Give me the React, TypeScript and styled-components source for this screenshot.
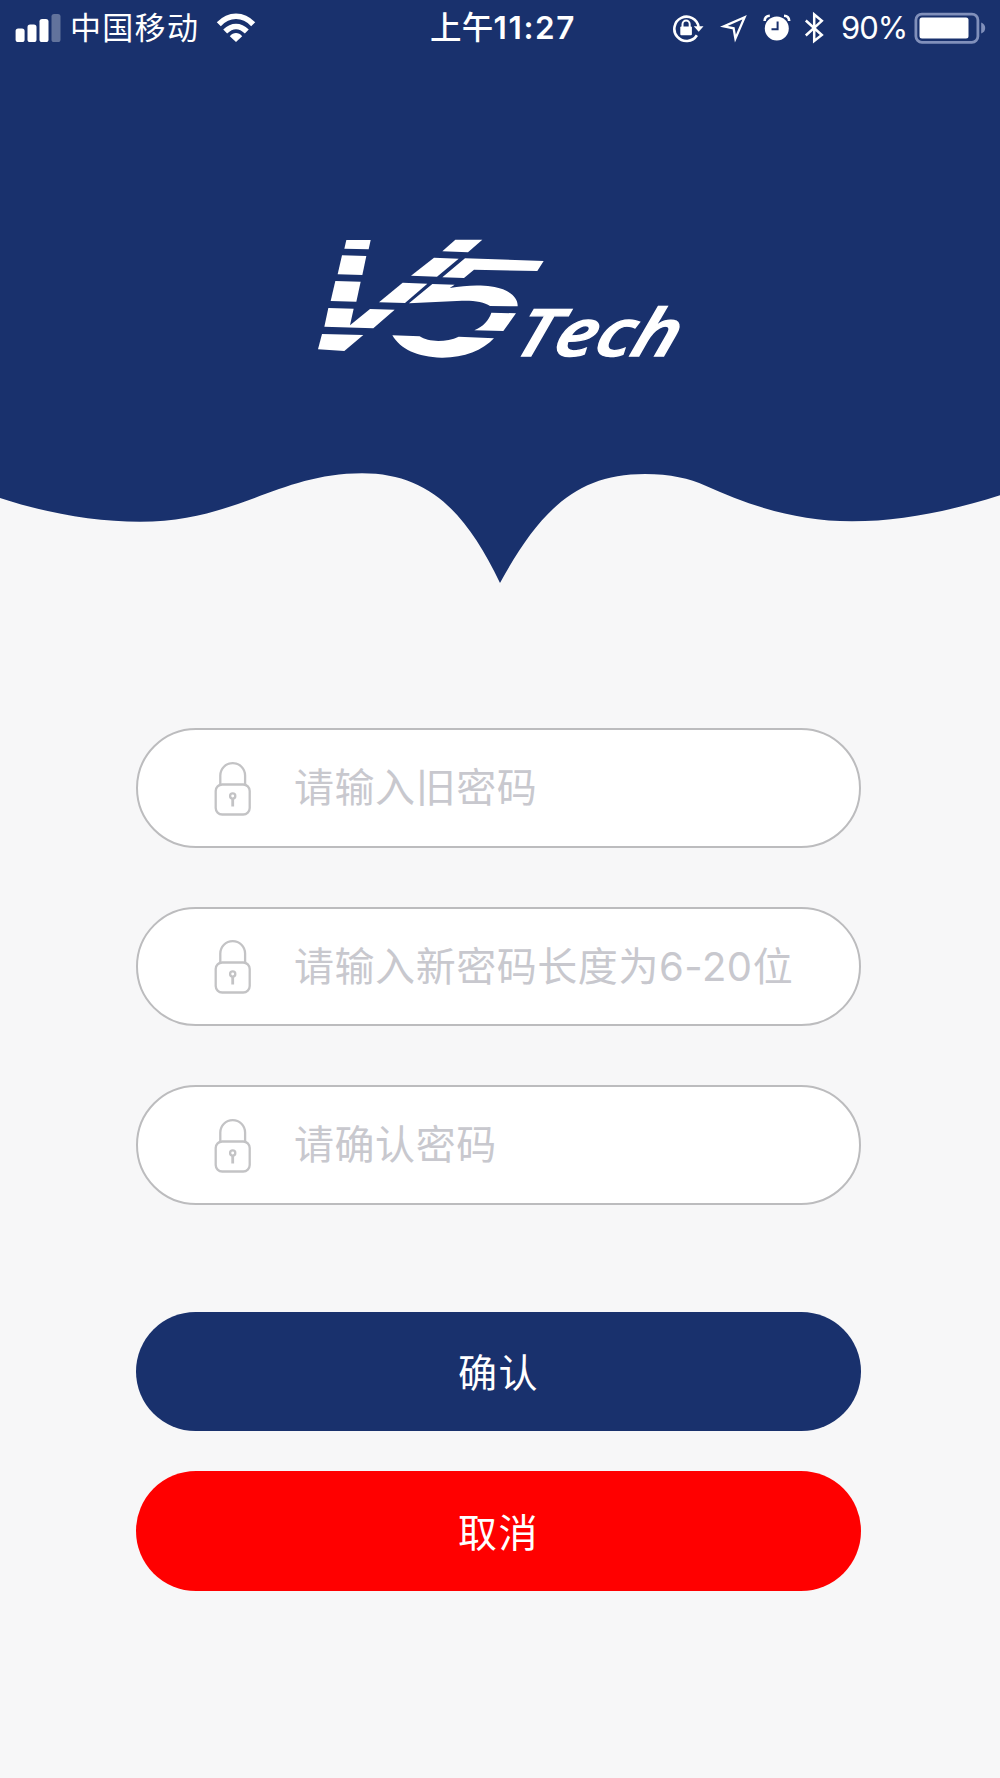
import React from "react";
import styled, { createGlobalStyle } from "styled-components";

const navy = "#19316d";
const sans = `Inter, "Noto Sans CJK SC", sans-serif`;

const GlobalStyle = createGlobalStyle`
  body {
    margin: 0;
    background: #f7f7f7;
    font-family: ${sans};
  }
  svg {
    display: block;
    flex: none;
  }
`;

const Screen = styled.div`
  display: flex;
  flex-direction: column;
  width: 1000px;
  height: 1778px;
  background: #f7f7f8;
  overflow: hidden;
`;

const StatusBar = styled.div`
  box-sizing: border-box;
  display: grid;
  grid-template-columns: 430px 1fr 328px;
  height: 55px;
  color: #fff;
  background: ${navy};
  font-size: 31.5px;
  line-height: 55px;
  white-space: nowrap;
`;

const StatusLeft = styled.div`
  display: flex;
  align-items: center;
  padding-left: 15px;
`;

const Carrier = styled.span`
  margin: 0 17px 0 9px;
  font-size: 31px;
  letter-spacing: 1.3px;
`;

const Clock = styled.div`
  font-weight: 500;
  letter-spacing: 0.3px;
`;

const Time = styled.span`
  font-weight: 600;
  letter-spacing: 1.6px;
`;

const StatusRight = styled.div`
  display: flex;
  align-items: center;
`;

const Percent = styled.span`
  width: 73px;
  margin-left: 17px;
  font-size: 31px;
  letter-spacing: -1px;
`;

const Spacer = styled.i<{ $w: number }>`
  flex: none;
  width: ${(p) => p.$w}px;
`;

const Header = styled.header`
  display: flex;
  justify-content: center;
  height: 395px;
  padding-top: 165px;
  box-sizing: border-box;
  background: ${navy};
`;

const Form = styled.form`
  display: flex;
  flex-direction: column;
  width: 725px;
  margin: 145px 0 0 136px;
`;

const Field = styled.label`
  box-sizing: border-box;
  display: flex;
  align-items: center;
  height: 119.5px;
  margin-bottom: 59px;
  padding-left: 75px;
  border: 2.5px solid #bcbcbe;
  border-radius: 60px;
  background: #fff;
`;

const Input = styled.input`
  flex: 1;
  min-width: 0;
  height: 70px;
  margin-left: 43px;
  padding: 0;
  border: 0;
  outline: 0;
  background: transparent;
  font: 400 40px ${sans};
  letter-spacing: 0.55px;

  &::placeholder {
    color: #c8c8ce;
    opacity: 1;
  }
`;

const Button = styled.button<{ $color: string }>`
  height: 119.5px;
  margin: 0 0 40px;
  padding: 0 0 2px;
  border: 0;
  border-radius: 60px;
  background: ${(p) => p.$color};
  color: #fff;
  font: 400 39px ${sans};
  letter-spacing: 1.5px;
`;

const Actions = styled.div`
  display: flex;
  flex-direction: column;
  margin-top: 48px;
`;

const Signal = () => (
  <svg width="46" height="30" viewBox="15 12 46 30" fill="#fff">
    <rect x="15.6" y="27.5" width="9" height="13.5" rx="2.6" />
    <rect x="27.5" y="23.5" width="9" height="17.5" rx="2.6" />
    <rect x="39.5" y="18" width="9" height="23" rx="2.6" />
    <rect x="51.5" y="13" width="9" height="28" rx="2.6" opacity="0.32" />
  </svg>
);

const Wifi = () => (
  <svg width="40" height="30" viewBox="216 12 40 30" fill="none" stroke="#fff" strokeWidth="5.6">
    <path d="M218.8 23.2C229 12.6 243 12.6 253.2 23.2" />
    <path d="M225.2 30.6C232 24 240 24 246.8 30.6" />
    <path d="M229.8 35.2C233.5 30.8 238.5 30.8 242.2 35.2L236 41Z" fill="#fff" stroke="none" />
  </svg>
);

const RotationLock = () => (
  <svg width="32" height="30" viewBox="672 12 32 30" fill="none" stroke="#fff">
    <path d="M696.9 34.3A12.2 12.2 0 1 1 698.6 26" strokeWidth="2.6" />
    <path d="M693.8 25.3H703.5L698.7 30.8Z" fill="#fff" stroke="none" />
    <rect x="680.3" y="25.6" width="11.6" height="8.7" rx="1" fill="#fff" stroke="none" />
    <path d="M682.5 26V23.2a3.6 3.6 0 0 1 7.2 0V26" strokeWidth="2" />
  </svg>
);

const Location = () => (
  <svg width="28" height="30" viewBox="720 12 28 30" fill="none" stroke="#fff" strokeWidth="2.3">
    <path d="M744.6 16.2L723.8 25.4L733.6 27.3L735.4 37.6Z" />
  </svg>
);

const Alarm = () => (
  <svg width="28" height="30" viewBox="763 12 28 30" fill="none">
    <circle cx="776.8" cy="27.4" r="12" fill="#fff" />
    <path d="M777.6 20.5V28.3H771.5" stroke={navy} strokeWidth="2" />
    <path d="M764.6 20Q764.8 15 769.8 14.8M784 14.8Q789 15 789.2 20" stroke="#fff" strokeWidth="2.6" />
  </svg>
);

const Bluetooth = () => (
  <svg width="20" height="34" viewBox="804 10 20 34" fill="none" stroke="#fff" strokeWidth="2.5">
    <path d="M805.8 19.5L821.8 34L814.2 40V13.5L821.8 19.8L805.8 34.5" />
  </svg>
);

const Battery = () => (
  <svg width="72" height="32" viewBox="914 11.5 72 32">
    <rect x="915.9" y="13.6" width="62" height="28.2" rx="6" fill="none" stroke="#8190bb" strokeWidth="2.8" />
    <rect x="919.5" y="17" width="49" height="21" rx="2.5" fill="#fff" />
    <path d="M981.2 22Q985.2 23.5 985.2 27.5T981.2 33Z" fill="#8190bb" />
  </svg>
);

const Logo = () => (
  <svg width="400" height="165" viewBox="0 0 1200 495" fill="#fff">
    <path d="M139 60H212L206 88L133 86Z" />
    <path d="M126 106L199 108L187 165L113 163Z" />
    <path d="M106 183L182 185L169 245L92 243Z" />
    <path d="M85 264L161 266L150 316L210 267L284 269L220 325L73 320Z" />
    <path d="M66 342L190 345L133 393L54 388Z" />
    <path d="M466 59H547L504 97L427 94Z" />
    <path d="M402 113L476 116L411 170L333 167Z" />
    <path d="M308 188L382 191L315 249L237 247Z" />
    <path d="M495 115L731 123L712 153L522 149L492 174L427 172Z" />
    <path d="M397 192L464 194L449 204C510 193 574 194 609 208C640 220 654 239 653 259L570 258C553 246 524 241 486 242L327 250Z" />
    <path d="M574 278L648 280L610 333L523 331C550 319 566 302 574 278Z" />
    <path d="M277 346L359 349C385 367 438 368 476 350L582 355C548 392 489 414 424 413C354 412 300 387 277 346Z" />
    <text
      transform="translate(632 409) skewX(-18) scale(1.17 1)"
      fontFamily="'Open Sans', sans-serif"
      fontSize="196"
      fontWeight="600"
      fontStyle="italic"
      stroke="#fff"
      strokeWidth="4"
      textLength="418"
      lengthAdjust="spacingAndGlyphs"
    >
      Tech
    </text>
  </svg>
);

const Wave = () => (
  <svg width="1000" height="133" viewBox="0 450 1000 133" fill={navy}>
    <path d="M0 449V498C45 513 95 521.7 140 521.7C237 521.7 278 473.3 362 473.3C430 473.3 467 514 500 583C540 510 577 474 645 474C670 474 690 478.5 705 485.5C750 506 797 521.3 852 521.3C902 521.3 950 511 1000 495.3V449Z" />
  </svg>
);

const Padlock = () => (
  <svg width="38" height="56" viewBox="-0.5 -1 38 56" fill="none" stroke="#c3c3c5" strokeWidth="2.3">
    <rect x="2.2" y="23.5" width="34" height="30" rx="6.5" />
    <path d="M6.8 23.5V14.5a12.4 12.4 0 0 1 24.8 0V23.5" />
    <circle cx="19.2" cy="35" r="2.6" />
    <path d="M19.2 37.6V45.5" strokeWidth="2.8" />
  </svg>
);

const prompts = ["请输入旧密码", "请输入新密码长度为6-20位", "请确认密码"];

export default function App() {
  return (
    <Screen>
      <GlobalStyle />
      <StatusBar>
        <StatusLeft>
          <Signal />
          <Carrier>中国移动</Carrier>
          <Wifi />
        </StatusLeft>
        <Clock>
          上午<Time>11:27</Time>
        </Clock>
        <StatusRight>
          <RotationLock />
          <Spacer $w={16} />
          <Location />
          <Spacer $w={15} />
          <Alarm />
          <Spacer $w={13} />
          <Bluetooth />
          <Percent>90%</Percent>
          <Battery />
        </StatusRight>
      </StatusBar>
      <Header>
        <Logo />
      </Header>
      <Wave />
      <Form>
        {prompts.map((prompt) => (
          <Field key={prompt}>
            <Padlock />
            <Input type="text" placeholder={prompt} />
          </Field>
        ))}
        <Actions>
          <Button type="button" $color={navy}>确认</Button>
          <Button type="button" $color="#ff0000">取消</Button>
        </Actions>
      </Form>
    </Screen>
  );
}
